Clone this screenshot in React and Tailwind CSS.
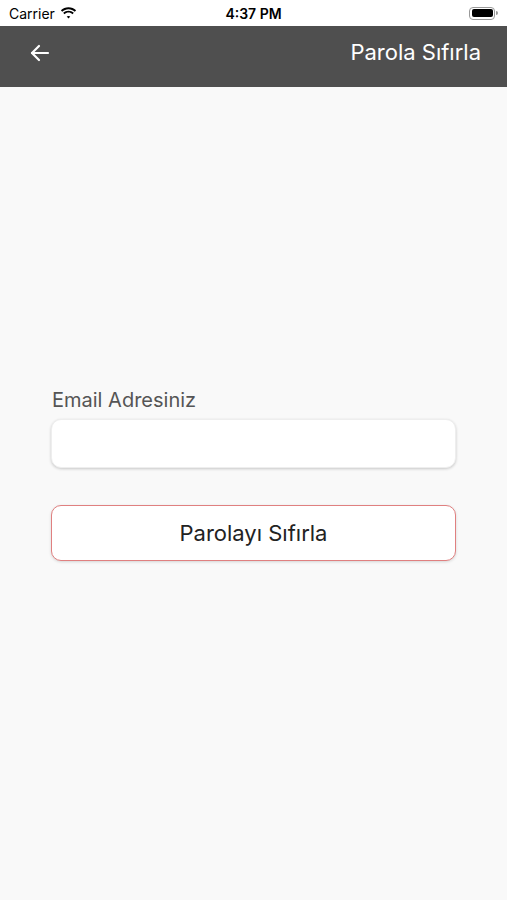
export default function App() {
  return (
    <div className="flex h-[900px] w-[507px] flex-col bg-[#f9f9f9] font-['Inter','Liberation_Sans',sans-serif]">
      {/* status bar */}
      <div className="flex h-[26px] items-center justify-between bg-white px-[9px] text-[14px] text-black">
        <div className="flex w-[120px] items-center gap-[5px]">
          <span>Carrier</span>
          <svg width="17" height="12" viewBox="0 0 17 12" fill="black">
            <path d="M8.5 2.2c2.4 0 4.6.9 6.3 2.5l1.3-1.4C14.1 1.3 11.4.2 8.5.2S2.9 1.3.9 3.3l1.3 1.4C3.9 3.1 6.1 2.2 8.5 2.2z" />
            <path d="M8.5 5.6c1.5 0 2.9.6 4 1.6l1.3-1.4c-1.4-1.3-3.3-2.1-5.3-2.1S4.6 4.5 3.2 5.8l1.3 1.4c1.1-1 2.5-1.6 4-1.6z" />
            <path d="M8.5 8.9c.7 0 1.3.3 1.8.7L8.5 11.6 6.7 9.6c.5-.4 1.1-.7 1.8-.7z" />
          </svg>
        </div>
        <span className="font-semibold">4:37 PM</span>
        <div className="flex w-[120px] justify-end">
          <div className="flex items-center">
            <div className="flex h-[13px] w-[26px] items-center rounded-[4px] border border-[#999] p-[1.5px]">
              <div className="h-full w-full rounded-[2px] bg-black" />
            </div>
            <div className="ml-[1px] h-[4px] w-[1.5px] rounded-r bg-[#999]" />
          </div>
        </div>
      </div>

      {/* header */}
      <div className="flex h-[61px] items-center justify-between bg-[#4f4f4f] pl-[28px] pr-[26px] pb-[8px]">
        <svg width="24" height="24" viewBox="0 0 24 24" fill="none" stroke="white" strokeWidth="2.2" strokeLinecap="round" strokeLinejoin="round">
          <path d="M20 12H4" />
          <path d="M11 5l-7 7 7 7" />
        </svg>
        <span className="text-[22px] text-white">Parola Sıfırla</span>
      </div>

      {/* form */}
      <div className="flex flex-col px-[51px] pt-[300px]">
        <label className="mb-[6px] pl-[1px] text-[20px] leading-[26px] text-[#555]">Email Adresiniz</label>
        <input className="h-[49px] w-full rounded-[10px] border border-[#eee] bg-white px-3 shadow-[0_1px_3px_rgba(0,0,0,0.2)] outline-none" />
        <button className="mt-[37px] h-[56px] w-full rounded-[10px] border-[1.5px] border-[#e08080] bg-white text-[22px] text-[#222] shadow-[0_1px_3px_rgba(0,0,0,0.15)]">
          Parolayı Sıfırla
        </button>
      </div>
    </div>
  );
}
